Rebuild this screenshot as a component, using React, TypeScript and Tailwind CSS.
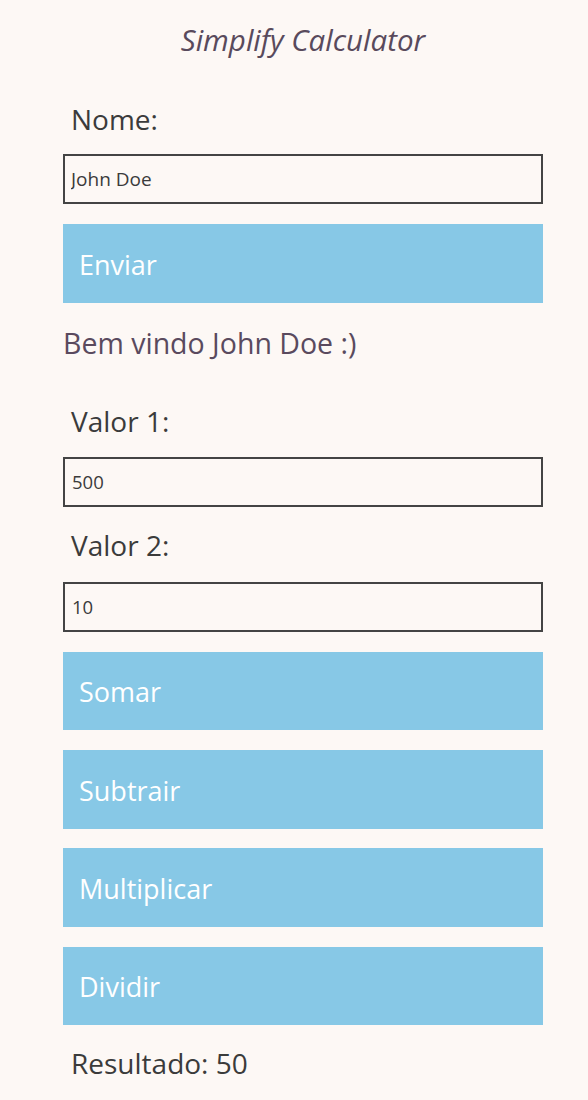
import { useState } from "react";

const font = { fontFamily: '"Open Sans", "Noto Sans", sans-serif' };

function ActionButton({ label, onClick }: { label: string; onClick?: () => void }) {
  return (
    <button
      onClick={onClick}
      className="w-full h-[78.7px] bg-[#87c8e6] text-white text-[27px] text-left pl-4 pt-[3px]"
    >
      {label}
    </button>
  );
}

export default function App() {
  const [name, setName] = useState("John Doe");
  const [a, setA] = useState("500");
  const [b, setB] = useState("10");
  const [result, setResult] = useState<number>(50);

  const calc = (op: string) => {
    const x = Number(a);
    const y = Number(b);
    if (op === "+") setResult(x + y);
    if (op === "-") setResult(x - y);
    if (op === "*") setResult(x * y);
    if (op === "/") setResult(x / y);
  };

  return (
    <div className="min-h-[1100px] bg-[#fdf8f5]" style={font}>
      <div className="w-[480px] ml-[63px] flex flex-col pt-[22px]">
        <h1 className="text-center italic text-[29.5px] leading-[36px] text-[#594a5c]">
          Simplify Calculator
        </h1>

        <label className="mt-[44px] ml-[8px] text-[28px] leading-[34px] text-[#3b3b3b]">Nome:</label>
        <input
          value={name}
          onChange={(e) => setName(e.target.value)}
          className="mt-[18px] h-[50px] border-2 border-[#444] bg-transparent px-[6px] text-[19px] text-[#3b3b3b] outline-none"
        />

        <div className="mt-[20px]">
          <ActionButton label="Enviar" />
        </div>

        <p className="mt-[22px] text-[28.5px] leading-[36px] text-[#5a4a5e]">Bem vindo {name} :)</p>

        <label className="mt-[43px] ml-[8px] text-[28px] leading-[34px] text-[#3b3b3b]">Valor 1:</label>
        <input
          value={a}
          onChange={(e) => setA(e.target.value)}
          className="mt-[19px] h-[50px] border-2 border-[#444] bg-transparent px-[7px] text-[18.5px] text-[#3b3b3b] outline-none"
        />

        <label className="mt-[21px] ml-[8px] text-[28px] leading-[34px] text-[#3b3b3b]">Valor 2:</label>
        <input
          value={b}
          onChange={(e) => setB(e.target.value)}
          className="mt-[20px] h-[50px] border-2 border-[#444] bg-transparent px-[7px] text-[18.5px] text-[#3b3b3b] outline-none"
        />

        <div className="mt-[20px] flex flex-col gap-[19.6px]">
          <ActionButton label="Somar" onClick={() => calc("+")} />
          <ActionButton label="Subtrair" onClick={() => calc("-")} />
          <ActionButton label="Multiplicar" onClick={() => calc("*")} />
          <ActionButton label="Dividir" onClick={() => calc("/")} />
        </div>

        <p className="mt-[21px] ml-[8px] text-[28px] leading-[34px] text-[#3b3b3b]">Resultado: {result}</p>
      </div>
    </div>
  );
}
